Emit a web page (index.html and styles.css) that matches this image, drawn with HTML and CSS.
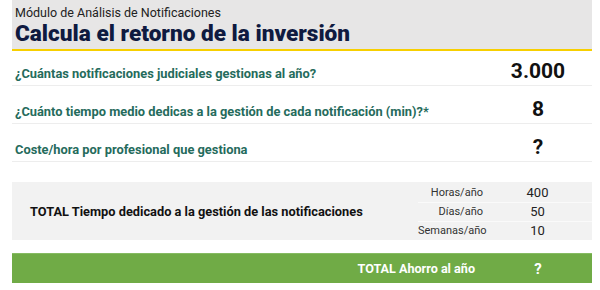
FILE: index.html
```html
<!DOCTYPE html>
<html lang="es">
<head>
<meta charset="utf-8">
<link rel="stylesheet" href="styles.css">
</head>
<body>
<div class="wrap">
  <div class="header">
    <div class="sub">Módulo de Análisis de Notificaciones</div>
    <div class="title">Calcula el retorno de la inversión</div>
  </div>
  <div class="row r1">
    <div class="label">¿Cuántas notificaciones judiciales gestionas al año?</div>
    <div class="val">3.000</div>
  </div>
  <div class="row">
    <div class="label">¿Cuánto tiempo medio dedicas a la gestión de cada notificación (min)?*</div>
    <div class="val">8</div>
  </div>
  <div class="row">
    <div class="label">Coste/hora por profesional que gestiona</div>
    <div class="val">?</div>
  </div>
  <div class="total">
    <div class="total-label">TOTAL Tiempo dedicado a la gestión de las notificaciones</div>
    <div class="stats">
      <div class="stat"><span class="sk">Horas/año</span><span class="sv">400</span></div>
      <div class="stat"><span class="sk">Días/año</span><span class="sv">50</span></div>
      <div class="stat"><span class="sk">Semanas/año</span><span class="sv">10</span></div>
    </div>
  </div>
  <div class="saving">
    <div class="saving-label">TOTAL Ahorro al año</div>
    <div class="saving-val">?</div>
  </div>
</div>
</body>
</html>
```
FILE: styles.css
```css
* { box-sizing: border-box; }
body { margin: 0; background: #fff; font-family: Roboto, "Liberation Sans", sans-serif; }
.wrap { margin: 0 8px 0 12px; width: 580px; }
.header { background: #e7e6e6; height: 51px; border-bottom: 2px solid #f7cf00; padding: 5px 0 0 3px; }
.sub { font-size: 12.5px; color: #222; line-height: 15px; }
.title { font-size: 22.6px; font-weight: 900; color: #0f1a40; line-height: 26px; margin-top: 1px; }
.row { display: flex; align-items: flex-end; height: 38px; border-bottom: 1px solid #ededed; padding: 0 0 3px 3px; }
.row.r1 { height: 35px; }
.label { flex: 1; font-size: 12.85px; font-weight: bold; color: #256b5c; line-height: 16px; }
.val { width: 108px; text-align: center; font-weight: bold; color: #111; font-size: 21px; line-height: 22px; margin-bottom: 0; }
.total { display: flex; align-items: center; background: #f2f2f2; margin-top: 20px; height: 58px; }
.total-label { flex: 1; font-size: 12.8px; font-weight: bold; color: #111; padding-left: 18px; }
.stats { width: 174px; display: flex; flex-direction: column; }
.stat { display: flex; align-items: center; height: 19px; border-top: 1px solid #fafafa; }
.stat:first-child { border-top: none; }
.sk { width: 65px; text-align: right; font-size: 11px; color: #333; }
.sv { flex: 1; text-align: center; font-size: 13px; color: #222; }
.saving { display: flex; align-items: center; justify-content: flex-end; background: #70ab46; border-top: 1px solid #86bb62; margin-top: 13px; height: 30px; }
.saving-label { font-size: 12.6px; font-weight: bold; color: #fff; margin-right: 9px; }
.saving-val { width: 108px; text-align: center; font-size: 15px; font-weight: bold; color: #fff; }
```
